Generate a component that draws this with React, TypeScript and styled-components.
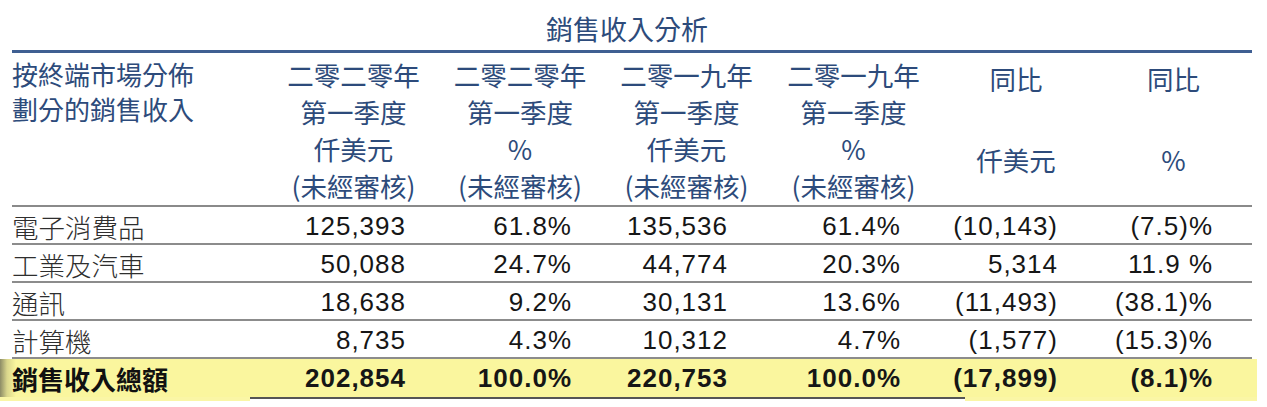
import React from "react";
import styled, { createGlobalStyle } from "styled-components";

const Global = createGlobalStyle`
  html, body { margin: 0; padding: 0; background: #ffffff; }
  body { width: 1267px; height: 407px; overflow: hidden; }
`;

const BLUE = "#2d4b7b";
const COLS = "258px 167px 166px 167px 167px 158px 157px";
const PADS = [0, 32, 32, 43, 37, 38, 40];

const Page = styled.div`
  padding: 10px 15px 0 12px;
  font-family: "Noto Sans CJK TC", "Noto Sans", sans-serif;
`;

const Title = styled.div`
  text-align: center;
  color: ${BLUE};
  font-size: 27px;
  line-height: 38px;
  height: 40px;
  padding-right: 10px;
`;

const HeaderGrid = styled.div`
  display: grid;
  grid-template-columns: ${COLS};
  border-top: 3px solid #3f5f92;
  border-bottom: 2px solid #8a8a8a;
  padding: 3px 0 2px;
  color: ${BLUE};
  font-size: 26.5px;
  line-height: 37px;
  box-sizing: border-box;
  height: 157px;
`;

const HeadLabel = styled.div`
  display: flex;
  flex-direction: column;
  align-items: flex-start;
  font-size: 26px;
  white-space: nowrap;
`;

const HeadLine = styled.span`
  line-height: 36px;
  height: 35px;
`;

const HeadCol = styled.div`
  display: flex;
  flex-direction: column;
  align-items: center;
  white-space: nowrap;
`;

const HeadYoY = styled.div`
  display: flex;
  flex-direction: column;
  align-items: center;
  justify-content: space-between;
  padding: 4px 0 26px;
`;

const Row = styled.div`
  display: grid;
  grid-template-columns: ${COLS};
  height: 36px;
  align-items: center;
  border-bottom: 2px solid #8c8c8c;
`;

const Label = styled.div`
  font-family: "Noto Sans CJK TC", sans-serif;
  font-weight: 300;
  font-size: 26.5px;
  color: #2e2e2e;
`;

const Num = styled.div<{ $pad: number; $bold?: boolean }>`
  font-family: "Liberation Sans", Arial, sans-serif;
  font-size: 26px;
  font-weight: ${(p) => (p.$bold ? 700 : 400)};
  color: #161616;
  text-align: right;
  padding-right: ${(p) => p.$pad - 1}px;
  white-space: pre;
  letter-spacing: 1px;
`;

const TotalBand = styled.div`
  margin: 0 -5px 0 -12px;
  padding: 0 5px 0 12px;
  background: linear-gradient(to right, #8d8c66 0px, #d9d68c 7px, #faf69e 16px, #faf69e 100%);
`;

const TotalRow = styled.div`
  display: grid;
  grid-template-columns: ${COLS};
  height: 38px;
  align-items: center;
`;

const TotalLabel = styled.div`
  font-weight: 700;
  font-size: 26px;
  color: #111;
  white-space: nowrap;
`;

const Foot = styled.div`
  display: flex;
  height: 4px;
  margin: 0 -5px 0 -12px;
`;

const FootYellow = styled.div<{ $w?: number }>`
  background: #faf6a6;
  ${(p) => (p.$w ? `width: ${p.$w}px;` : "flex: 1;")}
`;

const FootLine = styled.div`
  width: 715px;
  border-top: 2px solid #555;
  background: #fff;
`;

const rows: [string, string[]][] = [
  ["電子消費品", ["125,393", "61.8%", "135,536", "61.4%", "(10,143)", "(7.5)%"]],
  ["工業及汽車", ["50,088", "24.7%", "44,774", "20.3%", "5,314", "11.9 %"]],
  ["通訊", ["18,638", "9.2%", "30,131", "13.6%", "(11,493)", "(38.1)%"]],
  ["計算機", ["8,735", "4.3%", "10,312", "4.7%", "(1,577)", "(15.3)%"]],
];

const total = ["202,854", "100.0%", "220,753", "100.0%", "(17,899)", "(8.1)%"];

const quarterCols = [
  ["二零二零年", "仟美元"],
  ["二零二零年", "%"],
  ["二零一九年", "仟美元"],
  ["二零一九年", "%"],
];

export default function App() {
  return (
    <>
      <Global />
      <Page>
        <Title>銷售收入分析</Title>
        <HeaderGrid>
          <HeadLabel>
            <HeadLine>按終端市場分佈</HeadLine>
            <HeadLine>劃分的銷售收入</HeadLine>
          </HeadLabel>
          {quarterCols.map(([y, u], i) => (
            <HeadCol key={i}>
              <span>{y}</span>
              <span>第一季度</span>
              <span>{u}</span>
              <span>(未經審核)</span>
            </HeadCol>
          ))}
          <HeadYoY>
            <span>同比</span>
            <span>仟美元</span>
          </HeadYoY>
          <HeadYoY>
            <span>同比</span>
            <span>%</span>
          </HeadYoY>
        </HeaderGrid>
        {rows.map(([label, vals]) => (
          <Row key={label}>
            <Label>{label}</Label>
            {vals.map((v, i) => (
              <Num key={i} $pad={PADS[i + 1]}>
                {v}
              </Num>
            ))}
          </Row>
        ))}
        <TotalBand>
          <TotalRow>
            <TotalLabel>銷售收入總額</TotalLabel>
            {total.map((v, i) => (
              <Num key={i} $pad={PADS[i + 1]} $bold>
                {v}
              </Num>
            ))}
          </TotalRow>
        </TotalBand>
        <Foot>
          <FootYellow $w={250} />
          <FootLine />
          <FootYellow />
        </Foot>
      </Page>
    </>
  );
}
